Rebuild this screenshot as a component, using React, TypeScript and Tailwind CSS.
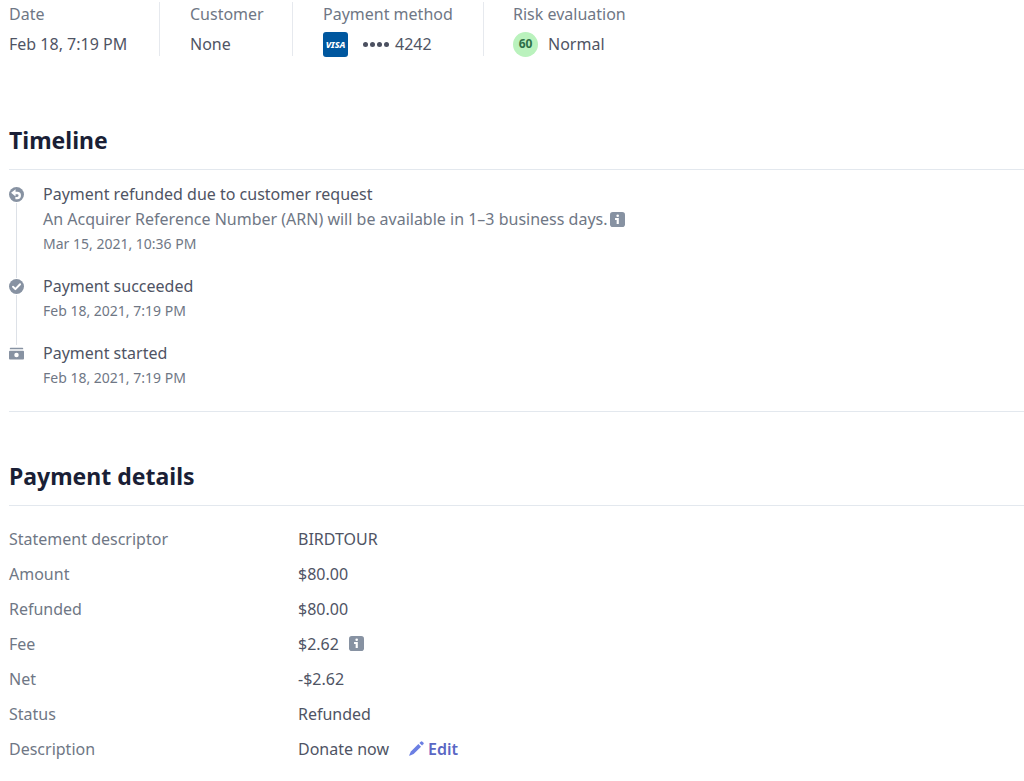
import React from 'react';

interface SummaryColumnProps {
  label: string;
  className?: string;
  children: React.ReactNode;
}

function SummaryColumn({ label, className = '', children }: SummaryColumnProps) {
  return (
    <div className={`shrink-0 border-[#e6e9ee] ${className}`}>
      <dt className="h-6 leading-6 text-[#6f7785]">{label}</dt>
      <dd className="mt-1.5 flex h-6 items-center leading-6">{children}</dd>
    </div>
  );
}

function VisaIcon() {
  return (
    <span className="flex size-[25px] items-center justify-center rounded-[3px] bg-[#00579f] text-[9px] leading-none font-extrabold text-white italic">
      VISA
    </span>
  );
}

function RefundIcon() {
  return (
    <svg className="size-[15px]" viewBox="0 0 16 16" aria-hidden="true">
      <circle cx="8" cy="8" r="8" fill="#8792a2" />
      <path d="M7 2.4 2.2 6.2 7 10V7.6h1.7a1.5 1.5 0 0 1 0 3H6.8V13h2a3.9 3.9 0 0 0 0-7.9H7z" fill="#fff" />
    </svg>
  );
}

function CheckIcon() {
  return (
    <svg className="size-[15px]" viewBox="0 0 16 16" aria-hidden="true">
      <circle cx="8" cy="8" r="8" fill="#8792a2" />
      <path d="m4.3 8.3 2.5 2.5 5-5.2" fill="none" stroke="#fff" strokeWidth="2.1" strokeLinecap="round" strokeLinejoin="round" />
    </svg>
  );
}

function CashIcon() {
  return (
    <svg className="size-[15px]" viewBox="0 0 16 16" aria-hidden="true">
      <path d="M1.6 1.8h12.8a.7.7 0 0 1 .7.7v1H.9v-1a.7.7 0 0 1 .7-.7z" fill="#8792a2" />
      <path fillRule="evenodd" d="M1 5h14a1 1 0 0 1 1 1v7.4a1 1 0 0 1-1 1H1a1 1 0 0 1-1-1V6a1 1 0 0 1 1-1zm7 2.3a2.4 2.4 0 1 0 0 4.8 2.4 2.4 0 0 0 0-4.8z" fill="#8792a2" />
    </svg>
  );
}

function InfoIcon() {
  return (
    <svg className="size-[15px]" viewBox="0 0 16 16" aria-hidden="true">
      <rect width="16" height="16" rx="3" fill="#8792a2" />
      <circle cx="8.2" cy="4" r="1.4" fill="#fff" />
      <path d="M5.4 6.5h4v6.2H7.1V8.4H5.4z" fill="#fff" />
    </svg>
  );
}

function PencilIcon() {
  return (
    <svg className="size-[15px]" viewBox="0 0 16 16" fill="#6b7fe3" aria-hidden="true">
      <path d="m10 3.2 2.8 2.8-7.9 7.9L.6 15.6c-.3.1-.5-.1-.4-.4L2 11.2z" />
      <path d="m11.1 2.1 1.4-1.4a1.3 1.3 0 0 1 1.8 0l1 1a1.3 1.3 0 0 1 0 1.8l-1.4 1.4z" />
    </svg>
  );
}

const events = [
  {
    icon: <RefundIcon />,
    title: 'Payment refunded due to customer request',
    note: 'An Acquirer Reference Number (ARN) will be available in 1–3 business days.',
    time: 'Mar 15, 2021, 10:36 PM',
  },
  { icon: <CheckIcon />, title: 'Payment succeeded', time: 'Feb 18, 2021, 7:19 PM' },
  { icon: <CashIcon />, title: 'Payment started', time: 'Feb 18, 2021, 7:19 PM' },
];

const details = [
  { label: 'Statement descriptor', value: 'BIRDTOUR' },
  { label: 'Amount', value: '$80.00' },
  { label: 'Refunded', value: '$80.00' },
  { label: 'Fee', value: '$2.62', info: true },
  { label: 'Net', value: '-$2.62' },
  { label: 'Status', value: 'Refunded' },
  { label: 'Description', value: 'Donate now', editable: true },
];

export default function App() {
  return (
    <main className="min-h-screen bg-white pl-[9px] font-['Noto_Sans',sans-serif] text-[16px] text-[#4f5464]">
      <dl className="flex pt-0.5">
        <SummaryColumn label="Date" className="w-[151px] border-r">Feb 18, 7:19 PM</SummaryColumn>
        <SummaryColumn label="Customer" className="w-[133px] border-r pl-[30px]">None</SummaryColumn>
        <SummaryColumn label="Payment method" className="w-[191px] border-r pl-[30px]">
          <VisaIcon />
          <span className="ml-[15px] flex items-center gap-0.5" aria-hidden="true">
            <i className="size-[5px] rounded-full bg-[#4b5060]" />
            <i className="size-[5px] rounded-full bg-[#4b5060]" />
            <i className="size-[5px] rounded-full bg-[#4b5060]" />
            <i className="size-[5px] rounded-full bg-[#4b5060]" />
          </span>
          <span className="ml-1.5">4242</span>
        </SummaryColumn>
        <SummaryColumn label="Risk evaluation" className="pl-[29px]">
          <span className="flex size-[25px] items-center justify-center rounded-full bg-[#baf2bd] text-[12px] font-bold text-[#2f7048]">60</span>
          <span className="ml-2.5">Normal</span>
        </SummaryColumn>
      </dl>

      <section className="mt-[68px] border-b border-[#e3e8ee] pb-[21px]">
        <h2 className="border-b border-[#e3e8ee] pb-[13px] text-[23px] leading-8 font-bold text-[#1a1f36]">Timeline</h2>
        <ol className="pt-3">
          {events.map((event) => (
            <li key={event.title} className="group flex gap-[19px]">
              <div className="flex w-[15px] flex-col items-center pt-1">
                <span className="flex h-[17px] items-center">{event.icon}</span>
                <span className="-mb-1 w-px grow bg-[#dde1e7] group-last:hidden" />
              </div>
              <div className="pb-[18px] group-last:pb-0">
                <p className="leading-[25px]">{event.title}</p>
                {event.note && (
                  <p className="flex items-center gap-0.5 leading-[25px] text-[#6f7785]">
                    {event.note}
                    <InfoIcon />
                  </p>
                )}
                <p className="text-[14px] leading-6 text-[#6f7785]">{event.time}</p>
              </div>
            </li>
          ))}
        </ol>
      </section>

      <section className="mt-12">
        <h2 className="border-b border-[#e3e8ee] pb-[13px] text-[23px] leading-8 font-bold text-[#1a1f36]">Payment details</h2>
        <dl className="pt-[15px]">
          {details.map((row) => (
            <div key={row.label} className="flex h-[35px] items-center">
              <dt className="w-[289px] shrink-0 text-[#6f7785]">{row.label}</dt>
              <dd className="flex items-center">
                {row.value}
                {row.info && (
                  <span className="ml-2.5">
                    <InfoIcon />
                  </span>
                )}
                {row.editable && (
                  <button type="button" className="ml-5 flex items-center gap-1 font-semibold text-[#5a67c4]">
                    <PencilIcon />
                    Edit
                  </button>
                )}
              </dd>
            </div>
          ))}
        </dl>
      </section>
    </main>
  );
}
